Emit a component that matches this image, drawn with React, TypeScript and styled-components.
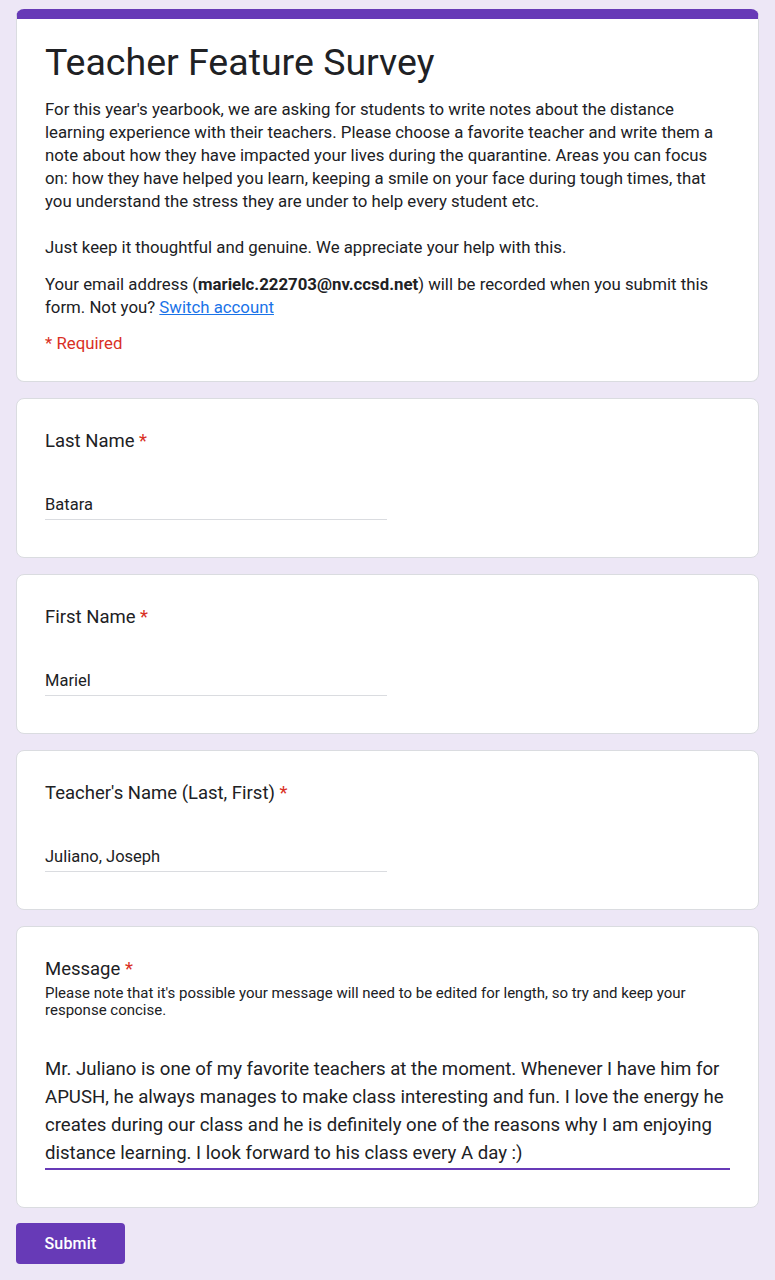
import React from "react";
import styled, { createGlobalStyle } from "styled-components";

const Global = createGlobalStyle`
  html, body { margin: 0; padding: 0; background: #ede7f6; }
  body { font-family: Roboto, "Liberation Sans", Arial, sans-serif; color: #202124; }
`;

const Page = styled.div`
  padding: 9px 16px 20px;
  display: flex;
  flex-direction: column;
  gap: 16px;
`;

const Card = styled.section`
  background: #fff;
  border: 1px solid #dadce0;
  border-radius: 8px;
  padding: 30px 28px 37px;
`;

const HeaderCard = styled(Card)`
  border-top: 10px solid #673ab7;
  padding: 19px 28px 26px;
`;

const Title = styled.h1`
  margin: 0;
  font-size: 37.5px;
  line-height: 48px;
  font-weight: 400;
  color: #202124;
`;

const Description = styled.p`
  margin: 12px 0 0;
  font-size: 16.8px;
  line-height: 23px;
  white-space: pre-wrap;
`;

const Email = styled.p`
  margin: 14px 0 0;
  font-size: 16.8px;
  line-height: 23px;
  b { font-weight: 700; }
  a { color: #1a73e8; text-decoration: underline; }
`;

const Required = styled.div`
  margin-top: 13px;
  font-size: 16.8px;
  line-height: 23px;
  color: #d93025;
`;

const QTitle = styled.div`
  font-size: 18.5px;
  line-height: 24px;
  span { color: #d93025; }
`;

const Help = styled.div`
  margin-top: 4px;
  font-size: 15px;
  line-height: 17px;
`;

const Input = styled.div`
  margin-top: 40px;
  width: 342px;
  font-size: 16.5px;
  line-height: 24px;
  padding-bottom: 2px;
  border-bottom: 1px solid #dadce0;
`;

const TextArea = styled.div`
  margin-top: 36px;
  font-size: 18.6px;
  line-height: 28px;
  padding-bottom: 1px;
  border-bottom: 2px solid #673ab7;
`;

const SubmitButton = styled.button`
  align-self: flex-start;
  width: 109px;
  height: 41px;
  margin-top: -1px;
  border: none;
  border-radius: 4px;
  background: #673ab7;
  color: #fff;
  font-family: Roboto, "Liberation Sans", Arial, sans-serif;
  font-size: 16px;
  font-weight: 500;
  letter-spacing: 0.2px;
`;

const questions = [
  { label: "Last Name", value: "Batara" },
  { label: "First Name", value: "Mariel" },
  { label: "Teacher's Name (Last, First)", value: "Juliano, Joseph" },
];

export default function App() {
  return (
    <>
      <Global />
      <Page>
        <HeaderCard>
          <Title>Teacher Feature Survey</Title>
          <Description>
            {"For this year's yearbook, we are asking for students to write notes about the distance learning experience with their teachers. Please choose a favorite teacher and write them a note about how they have impacted your lives during the quarantine. Areas you can focus on: how they have helped you learn, keeping a smile on your face during tough times, that you understand the stress they are under to help every student etc.\n\nJust keep it thoughtful and genuine. We appreciate your help with this."}
          </Description>
          <Email>
            Your email address (<b>marielc.222703@nv.ccsd.net</b>) will be recorded when you submit this form. Not you? <a href="#">Switch account</a>
          </Email>
          <Required>* Required</Required>
        </HeaderCard>
        {questions.map((q) => (
          <Card key={q.label}>
            <QTitle>
              {q.label} <span>*</span>
            </QTitle>
            <Input>{q.value}</Input>
          </Card>
        ))}
        <Card>
          <QTitle>
            Message <span>*</span>
          </QTitle>
          <Help>
            Please note that it's possible your message will need to be edited for length, so try and keep your response concise.
          </Help>
          <TextArea>
            Mr. Juliano is one of my favorite teachers at the moment. Whenever I have him for APUSH, he always manages to make class interesting and fun. I love the energy he creates during our class and he is definitely one of the reasons why I am enjoying distance learning. I look forward to his class every A day :)
          </TextArea>
        </Card>
        <SubmitButton>Submit</SubmitButton>
      </Page>
    </>
  );
}
